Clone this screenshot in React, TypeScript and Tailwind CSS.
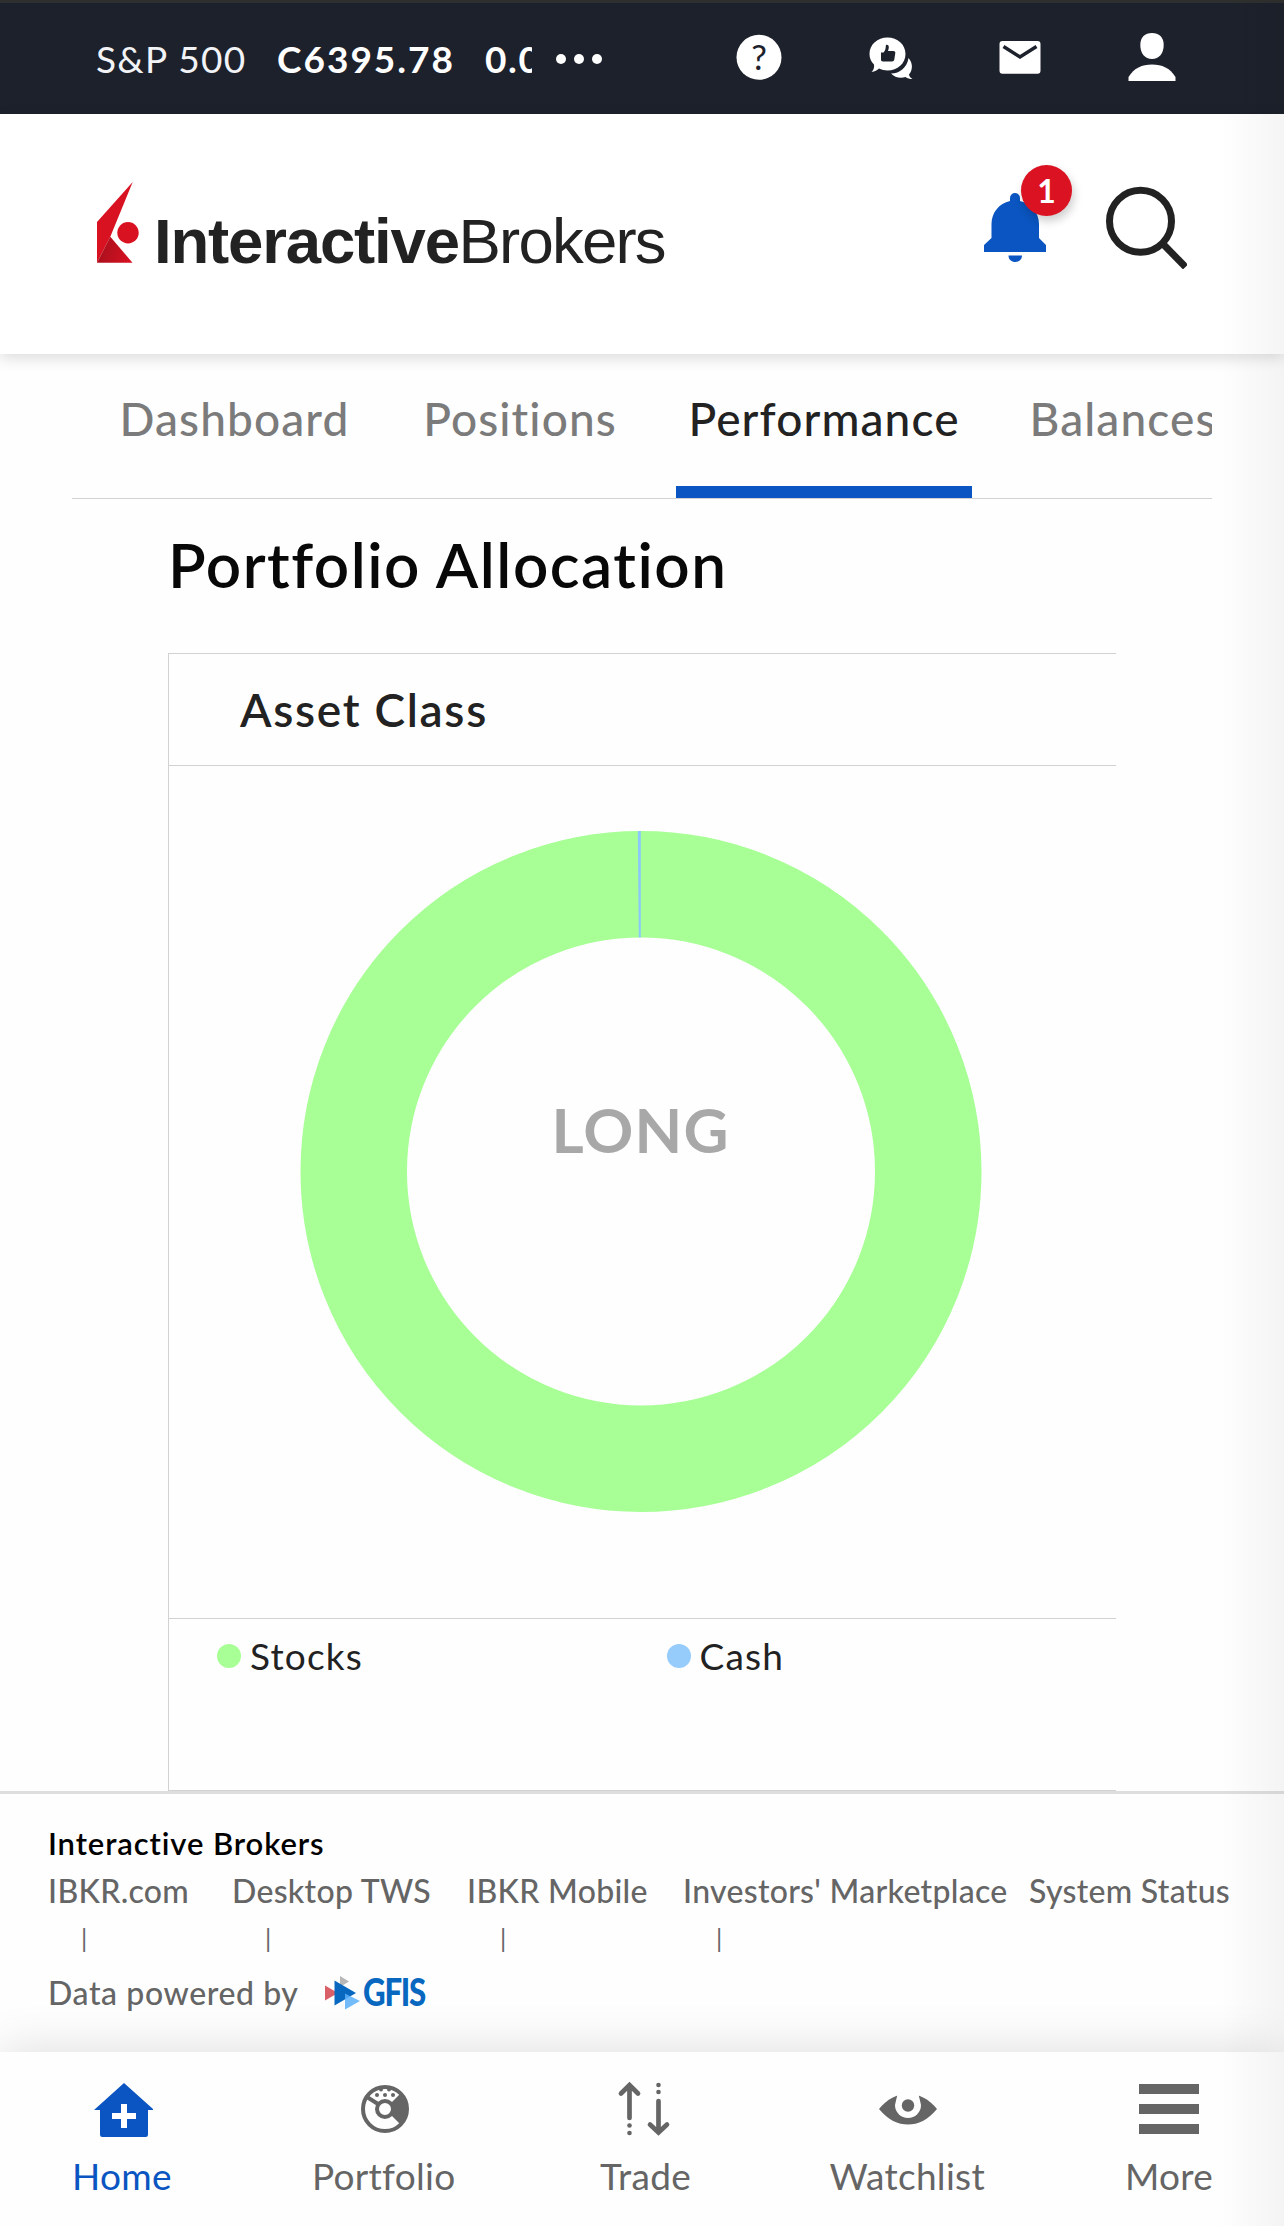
import type { ReactNode } from "react";

const tabs = [
  { label: "Dashboard", width: "w-[259px]", active: false },
  { label: "Positions", width: "w-[216px]", active: false },
  { label: "Performance", width: "w-[296px]", active: true },
  { label: "Balances", width: "w-[206px]", active: false },
];

const links = ["IBKR.com", "Desktop TWS", "IBKR Mobile", "Investors' Marketplace", "System Status"];

const legend = [
  { label: "Stocks", color: "bg-[#a8ff96]" },
  { label: "Cash", color: "bg-[#96ccfb]" },
];

function TopIcon({ children }: { children: ReactNode }) {
  return (
    <div className="flex w-[131px] justify-center">
      <svg width="60" height="61" viewBox="0 0 60 61" fill="#fff">
        {children}
      </svg>
    </div>
  );
}

function TopBar() {
  return (
    <div className="flex h-[114px] items-center border-t-3 border-[#2d302f] bg-[#1d212b] text-[37px] text-white">
      <div className="ml-24 flex w-[436px] overflow-hidden whitespace-nowrap">
        <span className="w-[181px] shrink-0 tracking-[1.3px] text-[#f1f3f7]">S&amp;P 500</span>
        <span className="w-[208px] shrink-0 font-bold tracking-[2px]">C6395.78</span>
        <span className="shrink-0 font-bold tracking-[1.6px]">0.00</span>
      </div>
      <div className="ml-6 flex w-[137px] gap-2">
        <i className="size-2.5 rounded-full bg-white" />
        <i className="size-2.5 rounded-full bg-white" />
        <i className="size-2.5 rounded-full bg-white" />
      </div>
      <TopIcon>
        <circle cx="30" cy="29.3" r="22.5" />
        <text x="30" y="41.5" textAnchor="middle" fontSize="35" fill="#1d212b">?</text>
      </TopIcon>
      <TopIcon>
        <path d="M27.5 9.5c10 0 18 7 18 16.5s-8 16.5-18 16.5c-3 0-6-.7-8.5-2-2 2-4 3-7.5 3.5 2-2 3-4 2.5-7.5C11 33.5 9.5 30 9.5 26c0-9.5 8-16.5 18-16.5z" />
        <path d="M48.5 30c4.5 5 4.5 12 .5 16.5.3 2 1.3 3 3.5 4.5-3 0-5-.5-7-2-5 1.5-11 .5-14.5-3.5 9 0 16-6 17.5-15.5z" />
        <path d="M21 24.5h2.5c1.500-1.500 2.300-3.500 2.300-6.500 0-2 3-1.500 3 1 0 1.500-.3 2.800-.8 4h5.500c1.200 0 2 1 1.800 2l-1 6.500c-.2 1.200-1 2-2.300 2H23c-1.500 0-2-1-2-2z" fill="#1d212b" />
      </TopIcon>
      <TopIcon>
        <rect x="8.5" y="13" width="41" height="32.7" rx="3" />
        <path d="M12.5 18.5 29 29l16.5-10.5" fill="none" stroke="#1d212b" strokeWidth="3.5" />
      </TopIcon>
      <TopIcon>
        <path d="M30 5c7 0 11.7 4 11.7 12C41.7 25.5 37 31 30 31s-11.7-5.5-11.7-14C18.3 9 23 5 30 5z" />
        <path d="M6.5 53v-4C12 40 20 36.5 30 36.5S48 40 53.5 49v4z" />
      </TopIcon>
    </div>
  );
}

function Logo() {
  return (
    <svg className="overflow-visible" width="572" height="98" viewBox="0 0 572 98">
      <defs>
        <linearGradient id="fold" x1="0" y1="0.6" x2="1" y2="0.8">
          <stop offset="0" stopColor="#a80f1c" />
          <stop offset="1" stopColor="#d91222" />
        </linearGradient>
      </defs>
      <path d="M35.7 17 0 57v40.7L13.3 71.7z" fill="#d91222" />
      <path d="M0 97.7 13.3 71.7 35.5 97.7z" fill="url(#fold)" />
      <circle cx="31" cy="67.7" r="10.7" fill="#d91222" />
      <g fill="#222" fontFamily="Liberation Sans, Arial, sans-serif" fontSize="63.5">
        <text x="57" y="97.5" fontWeight="bold" textLength="306">Interactive</text>
        <text x="361.5" y="97.5" textLength="208">Brokers</text>
      </g>
    </svg>
  );
}

function Header() {
  return (
    <header className="relative z-10 flex h-[240px] items-start bg-white pt-[51px] pr-[97px] pl-[97px] shadow-[0_4px_14px_rgba(0,0,0,0.14)]">
      <Logo />
      <div className="relative ml-auto h-[98px] w-[88px]">
        <svg width="88" height="98" viewBox="0 0 88 98" fill="#0a55c1">
          <path d="M26 36v-3a5 5 0 0 1 10 0v3c11 2.5 19 11.5 19 23v14l7 7v7H0v-7l7.5-7V59C7.5 47.5 15 38.5 26 36z" />
          <path d="M24.5 90.5h13.5c0 4-3 6.500-6.700 6.500s-6.800-2.500-6.800-6.500z" />
        </svg>
        <span className="absolute top-0 right-0 flex size-[51px] items-center justify-center rounded-full bg-[#db1222] text-[32px] font-bold text-white shadow-[2px_5px_10px_rgba(0,0,0,0.2)]">
          1
        </span>
      </div>
      <svg className="mt-[21px] ml-[33px]" width="82" height="83" viewBox="0 0 82 83" fill="none" stroke="#222" strokeWidth="7">
        <circle cx="35.5" cy="35.3" r="31" />
        <path d="M58 58 80.5 81" />
      </svg>
    </header>
  );
}

function Tabs() {
  return (
    <nav className="mx-[72px] flex h-[145px] gap-12 overflow-hidden border-b border-[#d2d2d2] pl-[33px] text-[46px] font-medium tracking-[1.1px]">
      {tabs.map((t) => (
        <div
          key={t.label}
          className={`flex shrink-0 items-center justify-center border-b-12 pb-1 ${t.width} ${
            t.active ? "border-[#0a55c1] text-[#222]" : "border-transparent text-[#7b7b7b]"
          }`}
        >
          {t.label}
        </div>
      ))}
    </nav>
  );
}

function Donut() {
  return (
    <svg className="block" width="947" height="852" viewBox="0 0 947 852">
      <circle cx="472" cy="405.5" r="287.25" fill="none" stroke="#a8ff96" strokeWidth="106.5" />
      <path d="M468.8 65h3v106.5h-2z" fill="#8cc8fa" />
      <text x="471" y="387" textAnchor="middle" fontSize="62" fontWeight="700" fill="#a8a8a8" textLength="177">
        LONG
      </text>
    </svg>
  );
}

function NavItem({ label, active, children }: { label: string; active?: boolean; children: ReactNode }) {
  return (
    <div className={`flex w-[100px] flex-col items-center ${active ? "text-[#0a55c1]" : "text-[#656565]"}`}>
      <svg width="62" height="60" viewBox="0 0 62 60" fill="currentColor">
        {children}
      </svg>
      <span className="mt-3 text-[37px] leading-[50px] tracking-[0.3px] whitespace-nowrap">{label}</span>
    </div>
  );
}

function BottomNav() {
  return (
    <nav className="relative flex h-[174px] justify-between bg-[#fefefe] pt-[27px] pr-[65px] pl-[72px] shadow-[0_-4px_44px_rgba(0,0,0,0.12)]">
      <NavItem label="Home" active>
        <path d="M33 4 63 31h-6v24.5q0 2.5-2.5 2.5h-43Q9 58 9 55.5V31H3z" />
        <path d="M30 25h6v9h9v6h-9v9h-6v-9h-9v-6h9z" fill="#fff" />
      </NavItem>
      <NavItem label="Portfolio">
        <g transform="translate(32 30)">
          <circle r="22" fill="none" stroke="currentColor" strokeWidth="4" />
          <path d="M7 -7 15.5 -15.5A22 22 0 0 1 15.5 15.5L7 7z" />
          <circle r="8" fill="#fefefe" stroke="currentColor" strokeWidth="4" />
          <path d="M-7-5-18-12" stroke="currentColor" strokeWidth="4" />
          <circle cx="-8" cy="-14" r="2" />
          <circle cy="-14" r="2" />
          <circle cx="8" cy="-14" r="2" />
          <circle cx="-4" cy="-19.5" r="2" />
          <circle cx="4" cy="-19.5" r="2" />
        </g>
      </NavItem>
      <NavItem label="Trade">
        <g fill="none" stroke="currentColor" strokeWidth="4.7" strokeLinecap="round">
          <path d="M14.5 6.5V39M6 14.5l8.5-8.5 8.5 8.5" />
          <path d="M43.5 22v31M35 45.500l8.500 8 8.500-8" />
        </g>
        <circle cx="14.5" cy="46.5" r="2.3" />
        <circle cx="14.5" cy="54" r="2.3" />
        <circle cx="43.5" cy="6" r="2.3" />
        <circle cx="43.5" cy="13" r="2.3" />
      </NavItem>
      <NavItem label="Watchlist">
        <path d="M3 30C11 20 21 15 32 15s21 5 29 15C52 41 42 45.5 32 45.5S12 41 3 30z" />
        <path d="M22 13h20l3 13a13 13 0 0 1-26 0z" fill="#fefefe" />
        <circle cx="32" cy="26.5" r="6.2" />
      </NavItem>
      <NavItem label="More">
        <path d="M1 5h60v10H1zM1 25h60v10H1zM1 45h60v10H1z" />
      </NavItem>
    </nav>
  );
}

export default function App() {
  return (
    <div className="relative h-[2226px] w-[1284px] overflow-hidden bg-[#fefefe] font-['Lato',sans-serif] text-[#222]">
      <TopBar />
      <Header />
      <Tabs />
      <main className="h-[1292px] pl-[168px]">
        <h1 className="mb-6 flex h-[130px] items-center text-[62px] font-semibold tracking-[1.5px] text-[#080808]">
          Portfolio Allocation
        </h1>
        <section className="w-[948px] border-t border-b border-l border-[#d2d2d2]">
          <h2 className="flex h-28 items-center border-b border-[#d2d2d2] pl-[71px] text-[46px] font-semibold tracking-[1.7px]">
            Asset Class
          </h2>
          <Donut />
          <div className="grid h-[172px] grid-cols-2 content-start border-t border-[#d2d2d2] pt-[14px] pl-12 text-[37px] leading-[46px] tracking-[1.2px]">
            {legend.map((l) => (
              <div key={l.label} className="flex items-center gap-[9px]">
                <span className={`size-6 rounded-full ${l.color}`} />
                {l.label}
              </div>
            ))}
          </div>
        </section>
      </main>
      <footer className="h-[261px] border-t-3 border-[#dedede] pt-[25px] pl-12 text-[32px] leading-[48px] font-medium tracking-[0.3px] text-[#656565]">
        <div className="text-[31px] font-semibold tracking-[0.9px] text-black">Interactive Brokers</div>
        <div className="grid grid-cols-[184px_235px_216px_346px_auto] whitespace-nowrap">
          {links.map((l, i) => (
            <div key={l} className="h-24">
              {l}
              {i < links.length - 1 && <div className="pl-[33px] text-[25px] leading-[46px] font-normal">|</div>}
            </div>
          ))}
        </div>
        <div className="flex h-[60px] items-center tracking-[0.6px]">
          Data powered by
          <svg className="ml-[26px] overflow-visible" width="102" height="34" viewBox="0 0 102 34">
            <path d="M15 0 24 5.5 15 11z" fill="#b8b8b8" />
            <path d="M0 9.5v15L13 17z" fill="#d95f68" />
            <path d="M9.5 4.5v25L31 17z" fill="#0868c0" />
            <path d="M20 17.5v16L35 25z" fill="#5cb0f8" opacity="0.85" />
            <text x="38" y="30" fontSize="37" fontWeight="900" fill="#0868c0" letterSpacing="-1.5" textLength="62" lengthAdjust="spacingAndGlyphs">
              GFIS
            </text>
          </svg>
        </div>
      </footer>
      <BottomNav />
      {/* scroll edge shade */}
      <div className="pointer-events-none absolute inset-y-0 right-0 z-20 w-16 bg-linear-to-r from-transparent to-black/4" />
    </div>
  );
}
